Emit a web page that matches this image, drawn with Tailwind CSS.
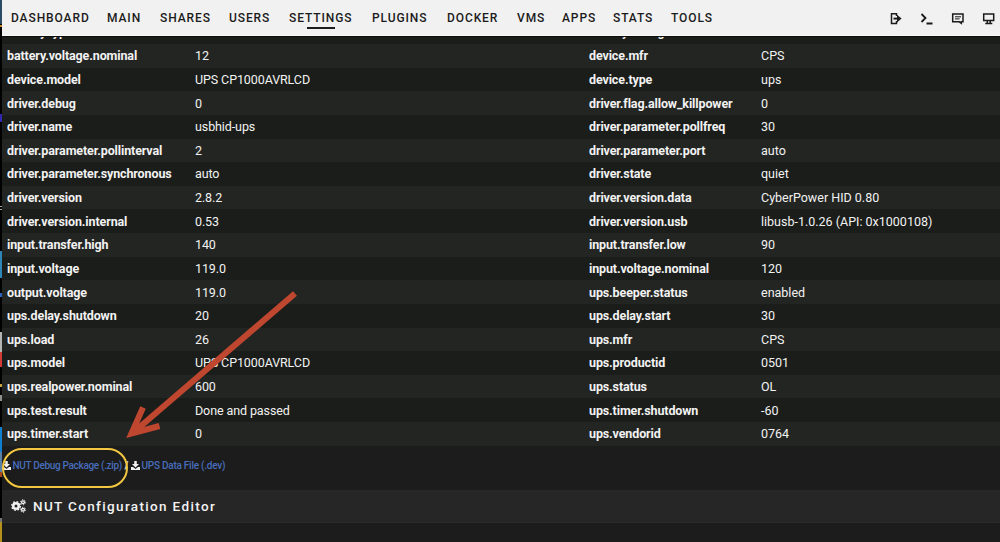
<!DOCTYPE html>
<html lang="en">
<head>
    <meta charset="UTF-8">
    <meta name="viewport" content="width=device-width, initial-scale=1.0">
    <title>NUT Settings</title>
    <script src="https://cdn.jsdelivr.net/npm/@tailwindcss/browser@4"></script>
</head>
<body class="bg-black font-['Roboto',sans-serif]">
    <div class="relative flex w-[1000px] h-[542px] overflow-hidden">

        <!-- Window edge -->
        <div class="w-[2px] shrink-0 flex flex-col bg-black">
            <div class="h-[24px] bg-[#2b4a66]"></div>
            <div class="h-[2px] mt-[1px] bg-[#c8902c]"></div>
            <div class="h-[8px] mt-[87px] bg-[#3026b0]"></div>
            <div class="h-[1px] mt-[84px] bg-[#aaaaaa]"></div>
            <div class="h-[1px] mt-[2px] bg-[#aaaaaa]"></div>
            <div class="h-[27px] mt-[41px] bg-[#2d86b5]"></div>
            <div class="h-[4px] mt-[15px] bg-[#2b5fc0]"></div>
            <div class="h-[20px] mt-[35px] bg-[#b5b5b5]"></div>
            <div class="h-[15px] bg-[#d23a35]"></div>
            <div class="h-[3px] mt-[17px] bg-[#c9a23c]"></div>
            <div class="h-[6px] mt-[8px] bg-[#8f8f8f]"></div>
            <div class="h-[25px] mt-[26px] bg-[#0f7fd0]"></div>
            <div class="h-[20px] bg-[#5a80a8]"></div>
            <div class="h-[5px] bg-[#a84a1e]"></div>
            <div class="h-[4px] mt-[41px] bg-[#777777]"></div>
            <div class="grow bg-[#b8901c]"></div>
        </div>

        <div class="flex-1 min-w-0 flex flex-col bg-[#1c1c1c]">
            <!-- Menu -->
            <div class="h-[36px] shrink-0 flex items-start justify-between bg-[#f1f1f1] border-b border-[#fafafa] text-[#1c1b1b]">
                <div class="grid grid-cols-[96px_53px_69px_60px_83px_75px_70px_45px_51px_58px_60px] pl-[9px] pt-[10px] font-medium text-[12px] leading-[16px] tracking-[0.9px]">
                    <span>DASHBOARD</span>
                    <span>MAIN</span>
                    <span>SHARES</span>
                    <span>USERS</span>
                    <span class="flex flex-col">SETTINGS<i class="w-[28px] h-[2px] ml-[18px] mt-[1px] bg-[#1c1b1b]"></i></span>
                    <span>PLUGINS</span>
                    <span>DOCKER</span>
                    <span>VMS</span>
                    <span>APPS</span>
                    <span>STATS</span>
                    <span>TOOLS</span>
                </div>
                <div class="flex gap-[17px] pt-[12px] pr-[4px]">
                    <svg class="w-[14px] h-[14px]" viewBox="0 0 14 14" fill="none" stroke="currentColor" stroke-width="1.5"><path d="M7.500 4V1.700H2.500v9.800h5V9"/><path d="M4.500 6.600h5" stroke-width="2"/><path d="M8 2.800 12.600 6.600 8 10.400z" fill="currentColor" stroke="none"/></svg>
                    <svg class="w-[14px] h-[14px]" viewBox="0 0 14 14" fill="none" stroke="currentColor" stroke-width="1.8"><path d="M1.500 2l4 4-4 4M6.500 11.500h6"/></svg>
                    <svg class="w-[14px] h-[14px]" viewBox="0 0 14 14" fill="none" stroke="currentColor" stroke-width="1.500"><path d="M1.700 2h10.300v7.800h-1.700v1.500l-2-1.500H1.700z"/><path d="M4 4.800h6M4 6.900h4.600" stroke-width="1"/></svg>
                    <svg class="w-[14px] h-[14px]" viewBox="0 0 14 14" fill="none" stroke="currentColor" stroke-width="1.500"><path d="M1.700 2h10v6.600h-10z"/><path d="M5.300 9v2.400M8.200 9v2.400M3.300 11.400h7"/></svg>
                </div>
            </div>

            <!-- UPS variables, scrolled under the menu -->
            <div class="h-[8px] shrink-0 overflow-hidden flex flex-col justify-end bg-[#1b1d1a] border-t border-[#0c0c0c]">
                <div class="grid grid-cols-[188px_394px_172px_auto] pl-[5px] h-[23px] shrink-0 items-center text-[12.5px] font-bold tracking-[-0.12px] text-[#f2f2f2]">
                    <span>battery.type</span>
                    <span></span>
                    <span>battery.voltage</span>
                </div>
            </div>
            <div id="vars" class="shrink-0 text-[12.5px] text-[#f2f2f2]"></div>

            <!-- Downloads -->
            <div class="h-[44px] shrink-0 flex items-center pb-[4px] font-medium text-[10px] text-[#486dba] whitespace-nowrap">
                <svg class="w-[9px] h-[9px] mr-[1.5px] text-[#f2f2f2]" viewBox="0 0 18 18" fill="currentColor"><path d="M6.500 0h5v6H16l-7 7-7-7h4.500z"/><path d="M0 12h4l5 4 5-4h4v6H0z"/></svg>
                <span class="w-[111px] tracking-[-0.32px]">NUT Debug Package (.zip)</span>
                <span class="w-[6px] pl-[1px] text-[#f2f2f2]">/</span>
                <svg class="w-[9px] h-[9px] ml-[1px] mr-[2px] text-[#f2f2f2]" viewBox="0 0 18 18" fill="currentColor"><path d="M6.500 0h5v6H16l-7 7-7-7h4.500z"/><path d="M0 12h4l5 4 5-4h4v6H0z"/></svg>
                <span class="tracking-[-0.25px]">UPS Data File (.dev)</span>
            </div>

            <!-- Editor title -->
            <div class="h-[33px] shrink-0 flex items-center pl-[9px] bg-[#262626] border-b border-[#2b2b2b] text-[#f2f2f2]">
                <svg class="w-[15px] h-[14px] mr-[7px]" viewBox="0 0 30 28" fill="none" stroke="currentColor">
                    <circle cx="10" cy="14" r="5.500" stroke-width="5"/><circle cx="10" cy="14" r="8.500" stroke-width="3" stroke-dasharray="3.340 3.340"/>
                    <circle cx="24" cy="6.500" r="2.800" stroke-width="2.600"/><circle cx="24" cy="6.500" r="5" stroke-width="2" stroke-dasharray="2.600 2.600"/>
                    <circle cx="24" cy="21.500" r="2.800" stroke-width="2.600"/><circle cx="24" cy="21.500" r="5" stroke-width="2" stroke-dasharray="2.600 2.600"/>
                </svg>
                <span class="text-[13.5px] font-medium tracking-[1.35px]">NUT Configuration Editor</span>
            </div>
        </div>

        <!-- Annotations -->
        <svg class="absolute inset-0 w-[1000px] h-[542px]" viewBox="0 0 1000 542" fill="none">
            <rect x="3" y="449" width="124" height="38" rx="19" stroke="#f3c73f" stroke-width="2"/>
            <path d="M295 293.500 135 431" stroke="#c0472f" stroke-width="6"/>
            <path d="M143 407.500 131.500 433.500 159.500 426" stroke="#c0472f" stroke-width="6"/>
        </svg>
    </div>

    <script>
        const rows = [
            ['battery.voltage.nominal', '12', 'device.mfr', 'CPS'],
            ['device.model', 'UPS CP1000AVRLCD', 'device.type', 'ups'],
            ['driver.debug', '0', 'driver.flag.allow_killpower', '0'],
            ['driver.name', 'usbhid-ups', 'driver.parameter.pollfreq', '30'],
            ['driver.parameter.pollinterval', '2', 'driver.parameter.port', 'auto'],
            ['driver.parameter.synchronous', 'auto', 'driver.state', 'quiet'],
            ['driver.version', '2.8.2', 'driver.version.data', 'CyberPower HID 0.80'],
            ['driver.version.internal', '0.53', 'driver.version.usb', 'libusb-1.0.26 (API: 0x1000108)'],
            ['input.transfer.high', '140', 'input.transfer.low', '90'],
            ['input.voltage', '119.0', 'input.voltage.nominal', '120'],
            ['output.voltage', '119.0', 'ups.beeper.status', 'enabled'],
            ['ups.delay.shutdown', '20', 'ups.delay.start', '30'],
            ['ups.load', '26', 'ups.mfr', 'CPS'],
            ['ups.model', 'UPS CP1000AVRLCD', 'ups.productid', '0501'],
            ['ups.realpower.nominal', '600', 'ups.status', 'OL'],
            ['ups.test.result', 'Done and passed', 'ups.timer.shutdown', '-60'],
            ['ups.timer.start', '0', 'ups.vendorid', '0764'],
        ];

        document.getElementById('vars').innerHTML = rows.map(([k1, v1, k2, v2]) => `
            <div class="grid grid-cols-[188px_394px_172px_auto] items-center h-[23.64px] pl-[5px] pt-[1px] leading-[20px] whitespace-nowrap odd:bg-[#232522] even:bg-[#1b1d1a]">
                <span class="font-bold tracking-[-0.12px]">${k1}</span>
                <span class="tracking-[-0.1px]">${v1}</span>
                <span class="font-bold tracking-[-0.12px]">${k2}</span>
                <span>${v2}</span>
            </div>`).join('');
    </script>
</body>
</html>
